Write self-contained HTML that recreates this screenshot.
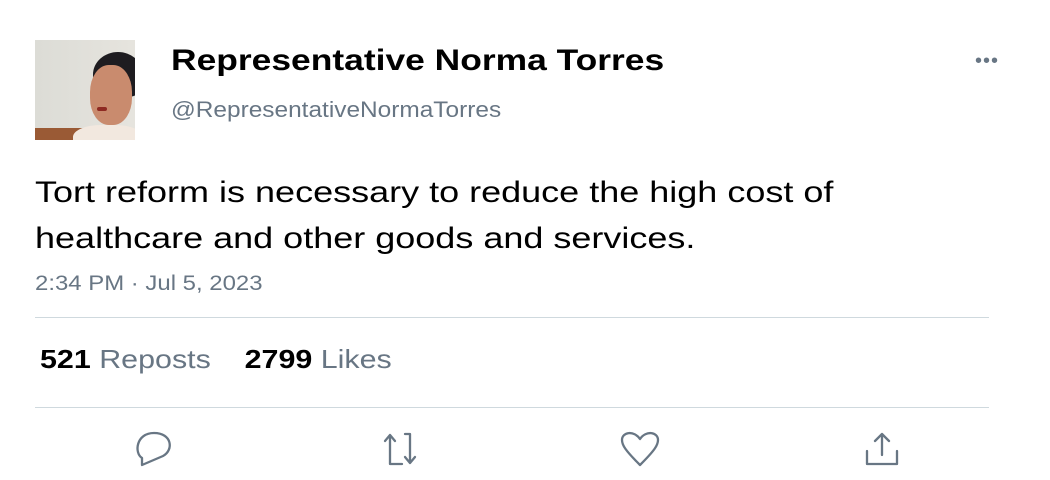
<!DOCTYPE html>
<html><head><style>
body{margin:0;width:1050px;height:480px;background:#fff;font-family:"Liberation Sans",Arial,sans-serif;position:relative;overflow:hidden}
.a{position:absolute;transform-origin:0 0;white-space:nowrap}
</style></head><body>
<div class="a" style="left:35px;top:40px;width:100px;height:100px;overflow:hidden;background:linear-gradient(90deg,#dcdcd6,#e6e4de)">
 <div class="a" style="left:0;top:88px;width:60px;height:12px;background:#9a5a35"></div>
 <div class="a" style="left:58px;top:12px;width:50px;height:45px;border-radius:50% 50% 30% 30%;background:#1e1c20"></div>
 <div class="a" style="left:55px;top:25px;width:42px;height:60px;border-radius:45%;background:#c98b6e"></div>
 <div class="a" style="left:38px;top:85px;width:70px;height:30px;border-radius:40% 40% 0 0;background:#f2e8df"></div>
 <div class="a" style="left:62px;top:67px;width:10px;height:4px;border-radius:2px;background:#8e2a22"></div>
</div>
<div class="a" style="left:171px;top:44px;font-size:30px;font-weight:bold;color:#000;transform:scaleX(1.18)">Representative Norma Torres</div>
<div class="a" style="left:171px;top:97px;font-size:22px;color:#687684;transform:scaleX(1.11)">@RepresentativeNormaTorres</div>
<div class="a" style="left:975px;top:50px;font-size:20px;color:#687684;letter-spacing:1px">•••</div>
<div class="a" style="left:35px;top:170px;font-size:30px;line-height:46px;color:#000;transform:scaleX(1.2)">Tort reform is necessary to reduce the high cost of<br>healthcare and other goods and services.</div>
<div class="a" style="left:35px;top:272px;font-size:21px;color:#687684;transform:scaleX(1.14)">2:34 PM · Jul 5, 2023</div>
<div class="a" style="left:35px;top:317px;width:954px;height:1px;background:#cfd9de"></div>
<div class="a" style="left:40px;top:344px;font-size:26px;color:#687684;transform:scaleX(1.17)"><b style="color:#000">521</b> Reposts &nbsp;&nbsp;&nbsp;<b style="color:#000">2799</b> Likes</div>
<div class="a" style="left:35px;top:407px;width:954px;height:1px;background:#cfd9de"></div>
<svg class="a" style="left:0;top:420px" width="1050" height="60" fill="none" stroke="#687684" stroke-width="2.3" stroke-linecap="round" stroke-linejoin="round">
 <path d="M142 45 L142 38 C134 33 136 13 154 13 C172 13 174 30 163 36 L142 45"/>
 <path d="M385 21 L390 15 L395 21 M390 15 V44 H402 M405 14 H410 V43 M405 37 L410 43 L415 37"/>
 <path d="M640 45 C625 30 622 25 622 20 C622 12 634 10 640 19 C646 10 658 12 658 20 C658 25 655 30 640 45 Z"/>
 <path d="M882 35 V14 M875 21 L882 14 L889 21 M867 31 V44 H897 V31"/>
</svg>
</body></html>
